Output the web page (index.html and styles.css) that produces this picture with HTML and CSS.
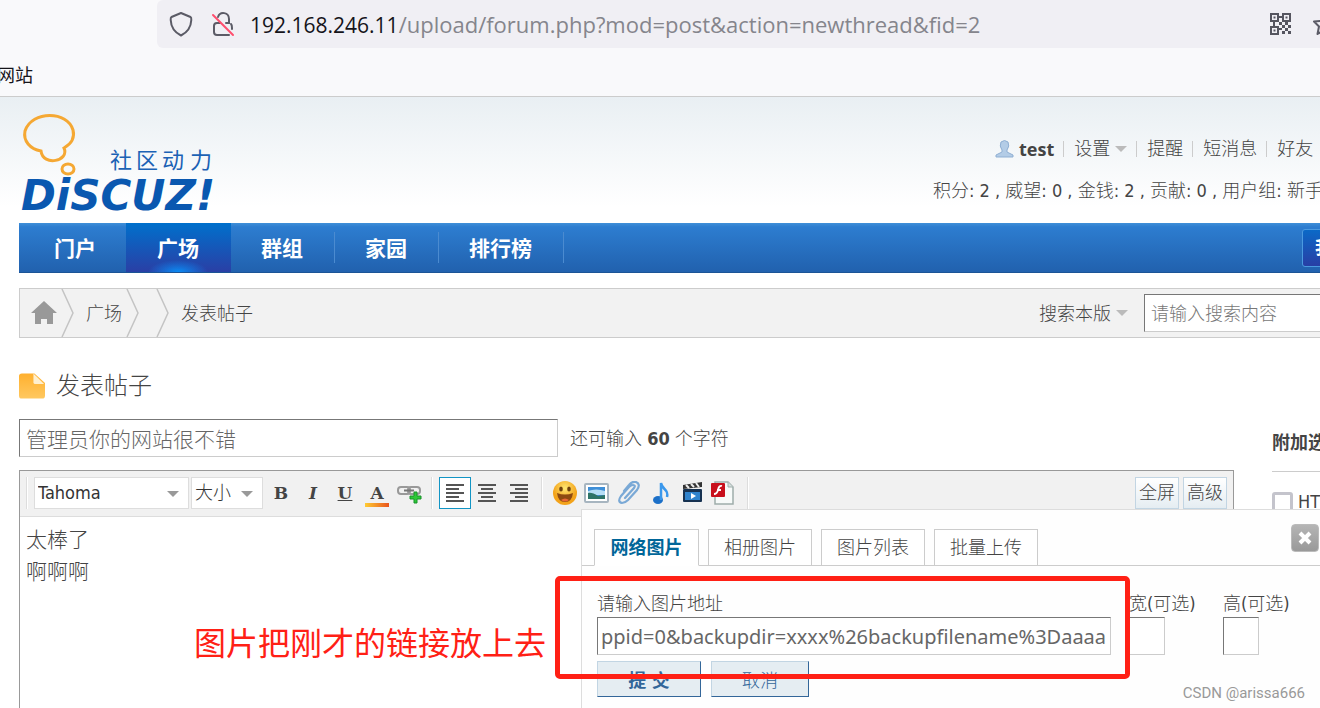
FILE: index.html
```html
<!DOCTYPE html>
<html lang="zh-CN">
<head>
    <meta charset="UTF-8">
    <meta name="viewport" content="width=device-width, initial-scale=1.0">
    <title>发表帖子 - Discuz!</title>
    <link rel="stylesheet" href="styles.css">
</head>
<body>

    <div class="browser">
        <div class="address-row">
            <div class="address-bar">
                <svg class="shield" width="24" height="26" viewBox="0 0 24 26" fill="none" stroke="#5b5b66" stroke-width="2" stroke-linejoin="round"><path d="M12 2 L21.500 6 Q22.500 6.500 22.300 9 C22 16 18 21.500 12 24.500 C6 21.500 2 16 1.700 9 Q1.500 6.500 2.500 6 Z"/></svg>
                <svg class="lock" width="24" height="26" viewBox="0 0 24 26" fill="none" stroke="#5b5b66" stroke-width="2" stroke-linecap="round"><path d="M7 6 C9 0 18 1 18 8 V12 H15 M9 12 H6 Q3 12 3 15 V21 Q3 24 6 24 H18 M20 13 Q21 14 21 17 V18"/><path stroke="#ff4f6e" d="M2 4 L22 24"/></svg>
                <span class="url"><b>192.168.246.11</b>/upload/forum.php?mod=post&amp;action=newthread&amp;fid=2</span>
                <svg class="qr" width="22" height="22" viewBox="0 0 22 22" fill="#55555f"><path fill-rule="evenodd" d="M0 0h9v9H0zM2 2v5h5V2zM12 0h9v9h-9zM14 2v5h5V2zM0 13h9v9H0zM2 15v5h5v-5z"/><path d="M3.500 3.500h2v2h-2zM15.500 3.500h2v2h-2zM3.500 16.500h2v2h-2zM9 3h3v2H9zM3 9h2v4H3zM9 9h3v3H9zM12 12h3v3h-3zM9 15h3v2H9zM15 9h3v3h-3zM18 12h3v3h-3zM15 15h3v3h-3zM12 18h3v3h-3zM18 18h3v3h-3z"/></svg>
                <svg class="star" width="24" height="24" viewBox="0 0 24 24" fill="none" stroke="#5b5b66" stroke-width="2" stroke-linejoin="round"><path d="M12 2 L15 9 L22 9.500 L17 14.500 L18.500 22 L12 18 L5.500 22 L7 14.500 L2 9.500 L9 9 Z"/></svg>
            </div>
        </div>
        <div class="bookmarks"><span>网站</span></div>
    </div>

    <div class="page">
        <div class="header">
            <svg class="logo" width="200" height="110" viewBox="0 0 200 110">
                <path d="M22 39 C11 37 4 29 6 19 C13 -2 49 -1 54 18 C56 26 52 32 45 36 C51 49 24 55 22 39 Z" fill="none" stroke="#f5a833" stroke-width="3"/>
                <ellipse cx="49" cy="57" rx="6" ry="5" fill="none" stroke="#f5a833" stroke-width="3"/>
                <text class="logo-slogan" x="91 117 143 171" y="56">社区动力</text>
                <text class="logo-name" x="2" y="98">DiSCUZ!</text>
            </svg>
            <div class="user-panel">
                <p class="user-links">
                    <svg width="19" height="18" viewBox="0 0 19 18"><path d="M6 2 Q9.500 -1 13 2 Q15 6 12 10 V12 L18 15 V17 H1 V15 L7 12 V10 Q4 6 6 2Z" fill="#b3cce6" stroke="#8fafd3"/></svg>
                    <a href="#" class="name">test</a><i></i>
                    <a href="#">设置</a><span class="arrow"></span><i></i>
                    <a href="#">提醒</a><i></i>
                    <a href="#">短消息</a><i></i>
                    <a href="#">好友</a>
                </p>
                <p class="user-stats">积分: 2 , 威望: 0 , 金钱: 2 , 贡献: 0 , 用户组: 新手上路</p>
            </div>
        </div>

        <div class="nav">
            <a href="#">门户</a>
            <a href="#" class="active">广场</a>
            <a href="#">群组</a>
            <a href="#">家园</a>
            <a href="#">排行榜</a>
            <button class="quick">我的中心</button>
        </div>

        <div class="crumb">
            <a href="#" class="home" aria-label="首页"><svg width="26" height="24" viewBox="0 0 26 24" fill="#999"><path d="M13 0 L26 12 H22 V23 H16 V18 H10 V23 H4 V12 H0 Z"/></svg></a>
            <svg class="sep" width="14" height="48" viewBox="0 0 14 48" fill="none" stroke="#c4c4c4" stroke-width="1.500"><path d="M1 0 L12 24 L1 48"/></svg>
            <a href="#" class="crumb-link">广场</a>
            <svg class="sep" width="14" height="48" viewBox="0 0 14 48" fill="none" stroke="#c4c4c4" stroke-width="1.500"><path d="M1 0 L12 24 L1 48"/></svg>
            <svg class="sep sep-empty" width="14" height="48" viewBox="0 0 14 48" fill="none" stroke="#c4c4c4" stroke-width="1.500"><path d="M1 0 L12 24 L1 48"/></svg>
            <a href="#" class="crumb-link">发表帖子</a>
            <div class="search">
                <a href="#">搜索本版</a><span class="arrow"></span>
                <input type="text" aria-label="搜索" placeholder="请输入搜索内容">
            </div>
        </div>

        <h1><svg width="26" height="26" viewBox="0 0 27 26"><defs><linearGradient id="doc" x2="0" y2="1"><stop stop-color="#ffb02e"/><stop offset="1" stop-color="#ffc860"/></linearGradient></defs><path d="M3 0 H16 L27 10 V23 Q27 26 24 26 H3 Q0 26 0 23 V3 Q0 0 3 0Z" fill="url(#doc)"/><path d="M15 0 L26 11 H17 Q15 11 15 9Z" fill="#fff0d0"/></svg>发表帖子</h1>

        <div class="post">
            <div class="post-main">
                <div class="subject">
                    <input type="text" aria-label="标题" value="管理员你的网站很不错">
                    <span>还可输入 <b>60</b> 个字符</span>
                </div>

                <div class="editor-wrap">
                    <div class="editor">
                        <div class="toolbar">
                            <span class="line"></span>
                            <div class="pick pick-font"><select aria-label="字体"><option>Tahoma</option></select></div>
                            <div class="pick pick-size"><select aria-label="大小"><option>大小</option></select></div>
                            <div class="tools">
                                <button class="letter" title="粗体"><b>B</b></button>
                                <button class="letter" title="斜体"><em>I</em></button>
                                <button class="letter" title="下划线"><u>U</u></button>
                                <button class="letter color" title="颜色">A</button>
                                <button title="链接"><svg width="26" height="22" viewBox="0 0 26 22" fill="none"><rect x="2" y="5" width="12" height="7" rx="3" stroke="#999" stroke-width="2"/><rect x="12" y="5" width="12" height="7" rx="3" stroke="#999" stroke-width="2"/><path d="M8 8.500h10" stroke="#777" stroke-width="2"/><path d="M18 10h3v4h4v3h-4v4h-3v-4h-4v-3h4z" fill="#2dc937" stroke="#18922a"/></svg></button>
                            </div>
                            <span class="line"></span>
                            <div class="tools">
                                <button class="on" title="居左"><svg width="20" height="20" viewBox="0 0 20 20" stroke="#555" stroke-width="2"><path d="M1 2h18M1 6h13M1 10h18M1 14h13M1 18h18"/></svg></button>
                                <button title="居中"><svg width="20" height="20" viewBox="0 0 20 20" stroke="#555" stroke-width="2"><path d="M1 2h18M4 6h12M1 10h18M4 14h12M1 18h18"/></svg></button>
                                <button title="居右"><svg width="20" height="20" viewBox="0 0 20 20" stroke="#555" stroke-width="2"><path d="M1 2h18M6 6h13M1 10h18M6 14h13M1 18h18"/></svg></button>
                            </div>
                            <span class="line"></span>
                            <div class="tools">
                                <button title="表情"><svg width="26" height="26" viewBox="0 0 26 26"><defs><radialGradient id="face" cy=".3"><stop stop-color="#ffe873"/><stop offset="1" stop-color="#f3a31b"/></radialGradient></defs><circle cx="13" cy="13" r="12" fill="url(#face)"/><ellipse cx="9" cy="9" rx="1.800" ry="2.500" fill="#70430f"/><ellipse cx="17" cy="9" rx="1.800" ry="2.500" fill="#70430f"/><path d="M5 13 Q13 16 21 13 Q20 22 13 22 Q6 22 5 13Z" fill="#8d4a12"/><path d="M9 20 Q13 17 17 20 Q13 23 9 20Z" fill="#ea6837"/></svg></button>
                                <button title="图片"><svg width="26" height="22" viewBox="0 0 26 22"><rect x="1" y="2" width="23" height="18" rx="1" fill="#fff" stroke="#a7b5c0" stroke-width="2"/><path d="M4 5h17v12H4z" fill="#3f8fd8"/><path d="M4 9 Q12 6 21 9 V13 H4Z" fill="#b6def6"/><path d="M4 11 Q8 10 14 14 L21 13 V17 H4Z" fill="#2e7468"/></svg></button>
                                <button title="附件"><svg width="24" height="24" viewBox="0 0 24 24" fill="none" stroke="#7aa9d6" stroke-width="2.200" stroke-linecap="round"><path d="M8 17 L17 7 Q19 4 16 4 Q14 4 12 6 L4 15 Q0 21 5 22 Q8 22 11 19 L20 9 Q24 3 19 1 Q15 0 12 4 L7 10"/></svg></button>
                                <button title="音乐"><svg width="24" height="26" viewBox="0 0 24 26"><ellipse cx="9" cy="20" rx="5" ry="4" fill="#1c70c8"/><path d="M12 20 V3 C13 10 20 9 18 17" fill="none" stroke="#3b98ec" stroke-width="2.500"/></svg></button>
                                <button title="视频"><svg width="22" height="22" viewBox="0 0 22 22"><path d="M1 3 L20 0 V5 L1 7Z" fill="#333"/><path d="M4 3l3 3M9 2l3 3M14 1l3 4" stroke="#eee" stroke-width="2"/><rect x="1" y="7" width="19" height="13" rx="1" fill="#163150"/><rect x="3" y="10" width="15" height="8" fill="#2f83cd"/><path d="M9 11 L14 14 L9 17Z" fill="#fff"/></svg></button>
                                <button title="Flash"><svg width="28" height="26" viewBox="1 0 28 26"><path d="M5 2h13l5 5v17H5z" fill="#f7faf9" stroke="#9fadab" stroke-width="1.500"/><path d="M18 2v5h5" fill="#d5dfdd" stroke="#9fadab"/><rect x="1" y="3" width="14" height="14" rx="1" fill="#c8101c"/><path d="M12 6 Q9 5 8 10 Q7 14 4 14 M7 10h4" fill="none" stroke="#fff" stroke-width="1.800"/></svg></button>
                            </div>
                            <span class="line"></span>
                            <div class="modes">
                                <button>全屏</button>
                                <button>高级</button>
                            </div>
                        </div>
                        <div class="editor-body" contenteditable="true" spellcheck="false">
                            <p>太棒了</p>
                            <p>啊啊啊</p>
                        </div>
                    </div>

                    <div class="popup">
                        <div class="tabs">
                            <button class="current">网络图片</button>
                            <button>相册图片</button>
                            <button>图片列表</button>
                            <button>批量上传</button>
                        </div>
                        <button class="close" aria-label="关闭"><svg width="14" height="14" viewBox="0 0 14 14" stroke="#fff" stroke-width="4"><path d="M2 2l10 10M12 2L2 12"/></svg></button>
                        <div class="fields">
                            <div class="field field-url">
                                <label for="imgUrl">请输入图片地址</label>
                                <input type="text" id="imgUrl" value="ppid=0&amp;backupdir=xxxx%26backupfilename%3Daaaa">
                            </div>
                            <div class="field">
                                <label for="imgWidth">宽(可选)</label>
                                <input type="text" id="imgWidth">
                            </div>
                            <div class="field">
                                <label for="imgHeight">高(可选)</label>
                                <input type="text" id="imgHeight">
                            </div>
                        </div>
                        <div class="actions">
                            <button class="submit">提 交</button>
                            <button class="cancel">取消</button>
                        </div>
                        <div class="mark-box"></div>
                    </div>
                    <div class="mark-text">图片把刚才的链接放上去</div>
                </div>
            </div>

            <div class="side">
                <h2>附加选项</h2>
                <label><input type="checkbox">HTML 代码</label>
            </div>
        </div>
    </div>

    <div class="watermark">CSDN @arissa666</div>

</body>
</html>
```
FILE: styles.css
```css
* {
    box-sizing: border-box;
}

body {
    margin: 0;
    height: 100vh;
    overflow: hidden;
    display: flex;
    flex-direction: column;
    font-family: "DejaVu Sans Condensed", "Noto Sans CJK SC", sans-serif;
    font-size: 18px;
    font-weight: 300;
    line-height: 26px;
    color: #444;
    background: #fff;
}

a {
    color: inherit;
    text-decoration: none;
}

p, h1, h2 {
    margin: 0;
}

b {
    font-weight: bold;
}

button, input, select {
    margin: 0;
    padding: 0;
    font: inherit;
    color: inherit;
    border-radius: 0;
}

svg {
    display: block;
    flex: none;
}

.arrow {
    width: 12px;
    border: 6px solid transparent;
    border-top-color: #bbb;
    border-bottom: 0;
}

/* browser chrome */
.browser {
    flex: none;
    background: #f9f9fb;
    border-bottom: 1px solid #ccc;
}

.address-row {
    padding-left: 157px;
}

.address-bar {
    display: flex;
    align-items: center;
    height: 48px;
    padding-left: 12px;
    background: #f0eff4;
    border-radius: 6px 0 0 6px;
    overflow: hidden;
}

.lock {
    margin-left: 18px;
}

.url {
    flex: 1;
    margin-left: 15px;
    font-family: "Open Sans", sans-serif;
    font-size: 22px;
    font-weight: 400;
    color: #85858c;
    white-space: nowrap;
}

.url b {
    font-size: 21px;
    font-weight: 400;
    color: #15141a;
}

.star {
    margin: 0 -16px 0 20px;
}

.bookmarks {
    height: 48px;
    padding-top: 15px;
    font-weight: 400;
    color: #15141a;
}

.bookmarks span {
    margin-left: -3px;
}

/* header */
.page {
    flex: 1;
    display: flex;
    flex-direction: column;
    padding-left: 19px;
    background: linear-gradient(#e9eff3, #fff 110px);
}

.header {
    display: flex;
    justify-content: space-between;
    height: 126px;
}

.logo {
    margin-top: 15px;
}

.logo-slogan {
    font-family: "Noto Sans CJK SC", sans-serif;
    font-size: 22px;
    font-weight: 400;
    fill: #1b62b5;
}

.logo-name {
    font-family: "DejaVu Sans", sans-serif;
    font-size: 42px;
    font-weight: bold;
    font-style: italic;
    fill: #0a58b0;
}

.user-panel {
    flex: 0 0 387px;
    padding-top: 39px;
    overflow: hidden;
    white-space: nowrap;
}

.user-links {
    display: flex;
    align-items: center;
    padding-left: 62px;
}

.user-links .name {
    margin-left: 5px;
    font-family: "Open Sans", sans-serif;
    font-weight: bold;
}

.user-links i {
    width: 1px;
    height: 16px;
    margin: 0 10px 0 9px;
    background: #ccc;
}

.user-links .arrow {
    margin-left: 5px;
}

.user-stats {
    margin-top: 16px;
}

.nav {
    display: flex;
    height: 50px;
    padding-left: 2px;
    background: linear-gradient(#3f8fd8, #2d7dd0 8%, #2161ae);
    border-bottom: 1px solid #1b5496;
    overflow: hidden;
}

.nav a {
    padding: 0 31px 0 30px;
    font-size: 21px;
    font-weight: bold;
    line-height: 52px;
    color: #fff;
    border-right: 1px solid;
    border-image: linear-gradient(transparent 20%, #4b8bd0 20%, #4b8bd0 80%, transparent 80%) 1;
}

.nav .active {
    padding-left: 31px;
    background: radial-gradient(ellipse 30px 12px at 50% 100%, #0a8cf5, transparent), linear-gradient(#0070cc, #2a3fa5);
}

.nav a:first-child {
    padding: 0 29px 0 33px;
}

.nav a:first-child, .nav .active {
    border-image: none;
    border-color: transparent;
}

.quick {
    height: 38px;
    margin: 6px -80px 0 auto;
    padding: 0 12px;
    font-weight: bold;
    color: #fff;
    background: linear-gradient(#0b69c7, #283fa5);
    border: 1px solid #4b9ae0;
    border-radius: 3px;
}

.crumb {
    display: flex;
    align-items: center;
    height: 50px;
    margin-top: 15px;
    background: #f2f2f2;
    border: 1px solid #ccc;
    border-right: 0;
}

.home {
    margin: 0 4px 0 11px;
}

.crumb-link {
    padding: 2px 4px 0 11px;
}

.sep-empty {
    margin-left: 16px;
}

.search {
    display: flex;
    align-items: center;
    margin-left: auto;
}

.search a {
    padding-top: 2px;
}

.search .arrow {
    margin: 0 16px 0 5px;
}

input[type="text"] {
    border: 1px solid #ccc;
    border-top-color: #777;
    border-left-color: #777;
    background: #fff;
    outline: 0;
}

.search input {
    width: 176px;
    height: 38px;
    padding-left: 6px;
    border-right: 0;
}

.search input::placeholder {
    color: #777;
    opacity: 1;
}

h1 {
    display: flex;
    align-items: center;
    gap: 11px;
    height: 38px;
    margin-top: 29px;
    font-size: 24px;
    font-weight: 300;
}

/* post form */
.post {
    flex: 1;
    display: flex;
    margin-top: 14px;
}

.post-main {
    flex: 1;
    display: flex;
    flex-direction: column;
}

.subject {
    display: flex;
    align-items: center;
    gap: 12px;
}

.subject span {
    padding-top: 2px;
}

.subject input {
    width: 539px;
    height: 38px;
    padding-left: 6px;
    font-size: 21px;
    color: #666;
}

.editor-wrap {
    flex: 1;
    position: relative;
    margin-top: 13px;
}

.editor {
    height: 100%;
    border: 1px solid #999;
    border-bottom: 0;
}

.toolbar {
    display: flex;
    align-items: center;
    height: 46px;
    padding: 0 6px 2px;
    background: #f1f1f1;
    border-bottom: 1px solid #ddd;
}

.line {
    width: 2px;
    height: 32px;
    margin-right: 6px;
    border-left: 1px solid #ddd;
    background: #fff;
}

.pick {
    position: relative;
    margin-right: 2px;
}

.pick select {
    appearance: none;
    display: block;
    width: 100%;
    height: 32px;
    padding-left: 3px;
    color: #333;
    background: #fff;
    border: 1px solid #ddd;
}

.pick::after {
    content: "";
    position: absolute;
    top: 14px;
    right: 10px;
    border: 6px solid transparent;
    border-top-color: #999;
    border-bottom: 0;
    pointer-events: none;
}

.pick-font {
    width: 155px;
}

.pick-size {
    width: 72px;
}

.tools {
    display: flex;
    margin-right: 6px;
}

.tools button {
    display: flex;
    justify-content: center;
    align-items: center;
    width: 32px;
    height: 32px;
    background: none;
    border: 1px solid transparent;
}

.tools .on {
    background: #fff;
    border-color: #1295c5;
}

.tools .letter {
    font-family: "DejaVu Serif", serif;
    font-size: 17px;
    font-weight: bold;
    color: #444;
}

.tools .color {
    position: relative;
}

.color::after {
    content: "";
    position: absolute;
    left: 3px;
    right: 3px;
    bottom: 1px;
    height: 4px;
    background: linear-gradient(90deg, #fc3, #e9541d);
}

.modes {
    display: flex;
    gap: 4px;
    margin-left: auto;
}

.modes button {
    width: 44px;
    height: 32px;
    background: linear-gradient(#fff, #e5edf2);
    border: 1px solid #c2d5e3;
}

.editor-body {
    padding: 7px 6px;
    font-size: 21px;
    line-height: 32px;
    outline: 0;
}

.side {
    flex: 0 0 48px;
    margin-left: 38px;
    padding-top: 11px;
    overflow: hidden;
    white-space: nowrap;
}

.side h2 {
    height: 42px;
    font-size: 18px;
    font-weight: bold;
    border-bottom: 1px solid #ccc;
}

.side label {
    display: flex;
    align-items: center;
    gap: 5px;
    margin-top: 17px;
}

.side input {
    appearance: none;
    flex: none;
    width: 21px;
    height: 21px;
    border: 3px solid #c4c4cc;
    border-radius: 3px;
}

/* image popup, lies over the editor and the side column */
.popup {
    position: absolute;
    top: 39px;
    left: 562px;
    right: -86px;
    bottom: 0;
    background: #fefefe;
    border: 1px solid #ddd;
    border-width: 1px 0 0 1px;
}

.tabs {
    display: flex;
    gap: 9px;
    height: 56px;
    padding: 19px 0 0 12px;
    border-bottom: 1px solid #ccc;
}

.tabs button {
    width: 104px;
    height: 37px;
    background: #fff;
    border: 1px solid #ccc;
}

.tabs .current {
    width: 105px;
    font-weight: bold;
    color: #069;
    border-bottom-color: #fff;
}

.close {
    position: absolute;
    top: 14px;
    right: 1px;
    display: flex;
    justify-content: center;
    align-items: center;
    width: 28px;
    height: 28px;
    background: linear-gradient(#b5b5b5, #999);
    border: 1px solid #bbb;
    border-radius: 4px;
}

.fields {
    display: flex;
    gap: 18px;
    padding: 25px 0 0 15px;
}

.field {
    display: flex;
    flex-direction: column;
    width: 76px;
    white-space: nowrap;
}

.field input {
    width: 36px;
    height: 38px;
    padding: 0 3px;
    font-family: "Noto Sans", sans-serif;
    font-size: 20px;
    font-weight: 400;
    color: #666;
}

.field-url, .field-url input {
    width: 514px;
}

.actions {
    display: flex;
    gap: 10px;
    padding: 6px 0 0 15px;
}

.actions button {
    width: 98px;
    height: 36px;
    padding-top: 4px;
    color: #336699;
    background: #e5edf2;
    border: 1px solid;
    border-color: #c2d5e3 #369 #369 #c2d5e3;
}

.actions .submit {
    width: 104px;
    font-weight: bold;
}

.mark-box {
    position: absolute;
    top: 66px;
    left: -27px;
    width: 575px;
    height: 103px;
    border: 5px solid #ff2015;
    border-radius: 5px;
    pointer-events: none;
}

.mark-text {
    position: absolute;
    top: 154px;
    left: 175px;
    font-size: 32px;
    font-weight: 400;
    line-height: 40px;
    color: #ff2015;
}

.watermark {
    position: absolute;
    right: 15px;
    bottom: 2px;
    font-family: Roboto, sans-serif;
    font-size: 15px;
    font-weight: 400;
    color: #999;
}
```
